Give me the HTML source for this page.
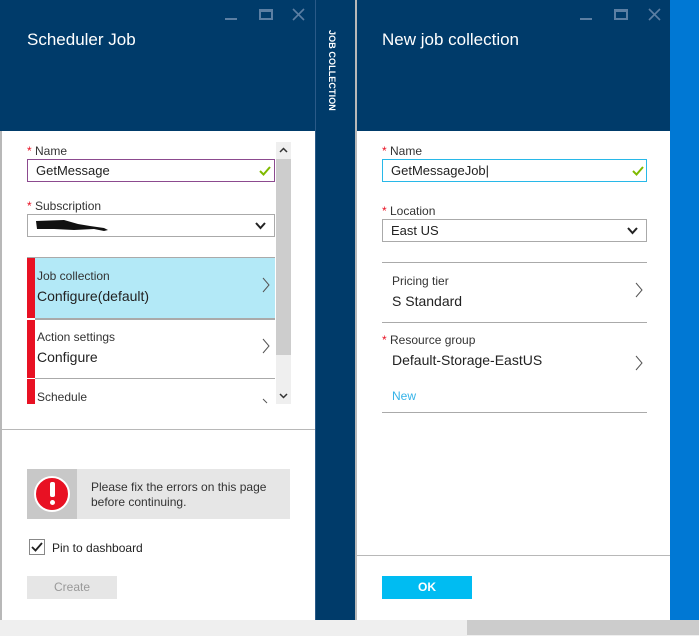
<!DOCTYPE html>
<html><head><style>
*{box-sizing:border-box;margin:0;padding:0}
body{width:699px;height:636px;position:relative;overflow:hidden;background:#fff;font-family:"Liberation Sans",sans-serif;color:#222}
.a{position:absolute}
.hdr{background:#003b6a}
.t{color:#fff;font-size:17px}
.lbl{font-size:12px;color:#333}
.st{color:#e81123}
.v{font-size:14px;color:#222}
</style></head><body>
<!-- left panel -->
<div class="a" style="left:0;top:0;width:2px;height:620px;background:#b8b8b8"></div>
<div class="a hdr" style="left:0;top:0;width:316px;height:131px"></div>
<div class="a t" style="left:27px;top:30px">Scheduler Job</div>
<div class="a" style="left:225px;top:18px;width:12px;height:2px;background:#5c7fa3"></div>
<div class="a" style="left:259px;top:9px;width:14px;height:11px;border:2px solid #5c7fa3;border-top-width:3px"></div>
<svg class="a" style="left:292px;top:8px" width="13" height="13"><path d="M1 1L12 12M12 1L1 12" stroke="#5c7fa3" stroke-width="1.6"/></svg>

<div class="a lbl" style="left:27px;top:144px"><span class="st">*</span> Name</div>
<div class="a" style="left:27px;top:159px;width:248px;height:23px;border:1px solid #8c4a8f"></div>
<div class="a v" style="left:36px;top:163px;font-size:13px">GetMessage</div>
<svg class="a" style="left:259px;top:166px" width="12" height="10"><path d="M1 5L4.5 8.5L11 1" stroke="#7fba00" stroke-width="2" fill="none"/></svg>
<div class="a lbl" style="left:27px;top:199px"><span class="st">*</span> Subscription</div>
<div class="a" style="left:27px;top:214px;width:248px;height:23px;border:1px solid #aaa"></div>
<svg class="a" style="left:34px;top:218px" width="76" height="16"><path d="M2 3L30 2L44 6L56 8L70 10L74 12L70 13L60 11L40 12L20 11L3 11Z" fill="#111"/></svg>
<svg class="a" style="left:255px;top:222px" width="11" height="8"><path d="M1 1L5.5 6L10 1" stroke="#222" stroke-width="2" fill="none"/></svg>
<div class="a" style="left:276px;top:142px;width:15px;height:262px;background:#efefef"></div>
<div class="a" style="left:276px;top:159px;width:15px;height:196px;background:#cdcdcd"></div>
<svg class="a" style="left:279px;top:147px" width="9" height="6"><path d="M1 5L4.5 1.5L8 5" stroke="#333" stroke-width="1.5" fill="none"/></svg>
<svg class="a" style="left:279px;top:393px" width="9" height="6"><path d="M1 1L4.5 4.5L8 1" stroke="#333" stroke-width="1.5" fill="none"/></svg>

<div class="a" style="left:27px;top:257px;width:248px;height:1px;background:#aaa"></div>
<div class="a" style="left:27px;top:258px;width:248px;height:60px;background:#b3e9f7"></div>
<div class="a" style="left:27px;top:318px;width:248px;height:2px;background:#aaa"></div>
<div class="a" style="left:27px;top:378px;width:248px;height:1px;background:#aaa"></div>
<div class="a" style="left:27px;top:258px;width:8px;height:146px;background:#e81123"></div>
<div class="a" style="left:27px;top:318px;width:8px;height:2px;background:#fff"></div>
<div class="a" style="left:27px;top:378px;width:8px;height:1px;background:#fff"></div>
<div class="a lbl" style="left:37px;top:269px">Job collection</div>
<div class="a v" style="left:37px;top:288px">Configure(default)</div>
<div class="a lbl" style="left:37px;top:330px">Action settings</div>
<div class="a v" style="left:37px;top:349px">Configure</div>
<div class="a lbl" style="left:37px;top:390px">Schedule</div>
<svg class="a" style="left:262px;top:277px" width="8" height="16"><path d="M1 1L7 8L1 15" stroke="#555" fill="none"/></svg>
<svg class="a" style="left:262px;top:338px" width="8" height="16"><path d="M1 1L7 8L1 15" stroke="#555" fill="none"/></svg>
<svg class="a" style="left:262px;top:398px" width="8" height="6"><path d="M1 1L5 5" stroke="#555" fill="none"/></svg>
<div class="a" style="left:0;top:429px;width:316px;height:1px;background:#b8b8b8"></div>

<div class="a" style="left:27px;top:469px;width:263px;height:50px;background:#e6e6e6"></div>
<div class="a" style="left:27px;top:469px;width:50px;height:50px;background:#c8c8c8"></div>
<div class="a" style="left:34px;top:476px;width:36px;height:36px;border-radius:50%;background:#e81123;border:2px solid #fff"></div>
<div class="a" style="left:50px;top:482px;width:5px;height:15px;background:#fff;border-radius:2px"></div>
<div class="a" style="left:50px;top:500px;width:5px;height:5px;background:#fff;border-radius:50%"></div>
<div class="a" style="left:91px;top:480px;font-size:12px;line-height:15px;color:#333">Please fix the errors on this page<br>before continuing.</div>
<div class="a" style="left:29px;top:539px;width:16px;height:16px;border:1px solid #888;background:#fff"></div>
<svg class="a" style="left:31px;top:542px" width="12" height="10"><path d="M1 5L4.5 8.5L11 1" stroke="#222" stroke-width="1.8" fill="none"/></svg>
<div class="a" style="left:52px;top:541px;font-size:12px;color:#222">Pin to dashboard</div>
<div class="a" style="left:27px;top:576px;width:90px;height:23px;background:#e6e6e6;color:#999;font-size:12px;text-align:center;line-height:23px">Create</div>

<!-- strip -->
<div class="a hdr" style="left:315px;top:0;width:41px;height:620px"></div>
<div class="a" style="left:315px;top:0;width:1px;height:620px;background:#2a5a88"></div>
<div class="a" style="left:327px;top:30px;writing-mode:vertical-rl;color:#fff;font-size:9px;font-weight:bold;letter-spacing:0.1px">JOB COLLECTION</div>

<!-- right panel -->
<div class="a" style="left:355px;top:0;width:2px;height:620px;background:#b8b8b8"></div>
<div class="a hdr" style="left:357px;top:0;width:313px;height:131px"></div>
<div class="a t" style="left:382px;top:30px">New job collection</div>
<div class="a" style="left:580px;top:18px;width:12px;height:2px;background:#5c7fa3"></div>
<div class="a" style="left:614px;top:9px;width:14px;height:11px;border:2px solid #5c7fa3;border-top-width:3px"></div>
<svg class="a" style="left:648px;top:8px" width="13" height="13"><path d="M1 1L12 12M12 1L1 12" stroke="#5c7fa3" stroke-width="1.6"/></svg>
<div class="a" style="left:670px;top:0;width:29px;height:620px;background:#0078d4"></div>

<div class="a lbl" style="left:382px;top:144px"><span class="st">*</span> Name</div>
<div class="a" style="left:382px;top:159px;width:265px;height:23px;border:1px solid #28b8e8"></div>
<div class="a v" style="left:391px;top:163px;font-size:13px">GetMessageJob<span style="font-weight:100">|</span></div>
<svg class="a" style="left:632px;top:166px" width="12" height="10"><path d="M1 5L4.5 8.5L11 1" stroke="#7fba00" stroke-width="2" fill="none"/></svg>
<div class="a lbl" style="left:382px;top:204px"><span class="st">*</span> Location</div>
<div class="a" style="left:382px;top:219px;width:265px;height:23px;border:1px solid #aaa"></div>
<div class="a v" style="left:391px;top:223px;font-size:13px">East US</div>
<svg class="a" style="left:627px;top:227px" width="11" height="8"><path d="M1 1L5.5 6L10 1" stroke="#222" stroke-width="2" fill="none"/></svg>
<div class="a" style="left:382px;top:262px;width:265px;height:1px;background:#aaa"></div>
<div class="a lbl" style="left:392px;top:274px">Pricing tier</div>
<div class="a v" style="left:392px;top:293px">S Standard</div>
<svg class="a" style="left:635px;top:282px" width="8" height="16"><path d="M1 1L7 8L1 15" stroke="#555" fill="none"/></svg>
<div class="a" style="left:382px;top:322px;width:265px;height:1px;background:#aaa"></div>
<div class="a lbl" style="left:382px;top:333px"><span class="st">*</span> Resource group</div>
<div class="a v" style="left:392px;top:352px">Default-Storage-EastUS</div>
<svg class="a" style="left:635px;top:355px" width="8" height="16"><path d="M1 1L7 8L1 15" stroke="#555" fill="none"/></svg>
<div class="a" style="left:392px;top:389px;font-size:12px;color:#35b3e8">New</div>
<div class="a" style="left:382px;top:412px;width:265px;height:1px;background:#aaa"></div>
<div class="a" style="left:357px;top:555px;width:313px;height:1px;background:#b8b8b8"></div>
<div class="a" style="left:382px;top:576px;width:90px;height:23px;background:#00bcf2;color:#fff;font-size:12px;font-weight:bold;text-align:center;line-height:23px">OK</div>

<!-- bottom scrollbar -->
<div class="a" style="left:0;top:620px;width:699px;height:16px;background:#efefef"></div>
<div class="a" style="left:467px;top:620px;width:232px;height:15px;background:#cccccc"></div>
</body></html>
